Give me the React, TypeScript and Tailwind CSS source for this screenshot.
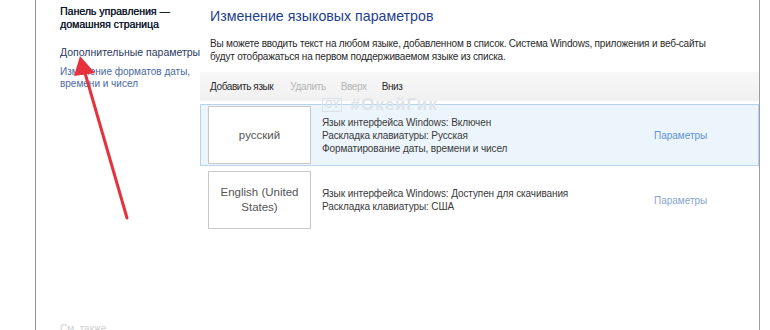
import React from "react";

const font = { fontFamily: '"Liberation Sans", Arial, sans-serif' };

function LangRow({
  name,
  lines,
  selected,
}: {
  name: React.ReactNode;
  lines: string[];
  selected?: boolean;
}) {
  return (
    <div
      className={
        "flex h-[62px] items-center border " +
        (selected ? "border-[#b9d3ea] bg-[#edf5fc]" : "border-transparent bg-transparent")
      }
    >
      <div className="ml-[7px] flex h-[58px] w-[103px] shrink-0 items-center justify-center border border-[#c9c9c9] bg-white text-center text-[11.5px] leading-[15px] text-[#555]">
        {name}
      </div>
      <div className="ml-[11px] flex w-[322px] flex-col whitespace-nowrap text-[10px] leading-[13px] tracking-[-0.1px] text-[#3a3a3a]">
        {lines.map((l) => (
          <div key={l}>{l}</div>
        ))}
      </div>
      <div
        className={
          "ml-[10px] text-[10px] " + (selected ? "text-[#5f93d0]" : "text-[#87a6cf]")
        }
      >
        Параметры
      </div>
    </div>
  );
}

export default function App() {
  return (
    <div className="relative flex h-[330px] w-[770px] overflow-hidden bg-white" style={font}>
      <div className="w-[35px] shrink-0" />
      <div className="w-[165px] shrink-0 border-l border-[#8f8f8f] pl-[24px] pt-[5px]">
        <div className="text-[10.5px] leading-[13px] text-[#121a30] [text-shadow:0.3px_0_0_#121a30]">
          Панель управления —
          <br />
          домашняя страница
        </div>
        <div className="mt-[15px] whitespace-nowrap text-[10.5px] leading-[13px] text-[#2b3a5e]">
          Дополнительные параметры
        </div>
        <div className="mt-[7px] text-[10px] leading-[12px] text-[#4a6a9e]">
          Изменение форматов даты,
          <br />
          времени и чисел
        </div>
        <div className="mt-[233px] text-[10px] leading-[12px] text-[#d0d0d0]">См. также</div>
      </div>
      <div className="relative w-[560px] shrink-0 border-r border-[#9a9ab8]">
        <div className="pl-[10px] pt-[6px] text-[14.2px] leading-[20px] text-[#1e3f8c]">
          Изменение языковых параметров
        </div>
        <div className="mt-[11px] whitespace-nowrap pl-[10px] text-[10px] leading-[13px] tracking-[-0.2px] text-[#2a2a2a]">
          Вы можете вводить текст на любом языке, добавленном в список. Система Windows, приложения и веб-сайты
          <br />
          будут отображаться на первом поддерживаемом языке из списка.
        </div>
        <div className="mt-[9px] flex h-[29px] items-center bg-gradient-to-b from-[#f7f7f7] to-[#f1f1f1] pl-[10px] text-[10px] tracking-[-0.4px]">
          <span className="text-[#2a2a2a]">Добавить язык</span>
          <span className="ml-[17px] text-[#b4b4b4]">Удалить</span>
          <span className="ml-[15px] text-[#b4b4b4]">Вверх</span>
          <span className="ml-[15px] text-[#2a2a2a]">Вниз</span>
        </div>
        <div className="mt-[3px] flex flex-col gap-[3px]">
          <LangRow
            selected
            name="русский"
            lines={[
              "Язык интерфейса Windows: Включен",
              "Раскладка клавиатуры: Русская",
              "Форматирование даты, времени и чисел",
            ]}
          />
          <LangRow
            name={
              <span>
                English (United
                <br />
                States)
              </span>
            }
            lines={["Язык интерфейса Windows: Доступен для скачивания", "Раскладка клавиатуры: США"]}
          />
        </div>
        <div className="pointer-events-none absolute left-[122px] top-[97px] flex items-center gap-[8px] text-[#dde3ea]">
          <span className="border border-[#dde3ea] px-[2px] text-[10px] font-bold leading-[12px]">OY</span>
          <span className="text-[17px] font-bold leading-[16px] tracking-[1px]">#ОкейГик</span>
        </div>
      </div>
      <svg className="pointer-events-none absolute left-0 top-0" width="770" height="330">
        <line x1="127" y1="218" x2="83" y2="66" stroke="#e5323c" strokeWidth="3" strokeLinecap="round" />
        <polygon points="80,56 95,73 74,76" fill="#e5323c" />
      </svg>
    </div>
  );
}
